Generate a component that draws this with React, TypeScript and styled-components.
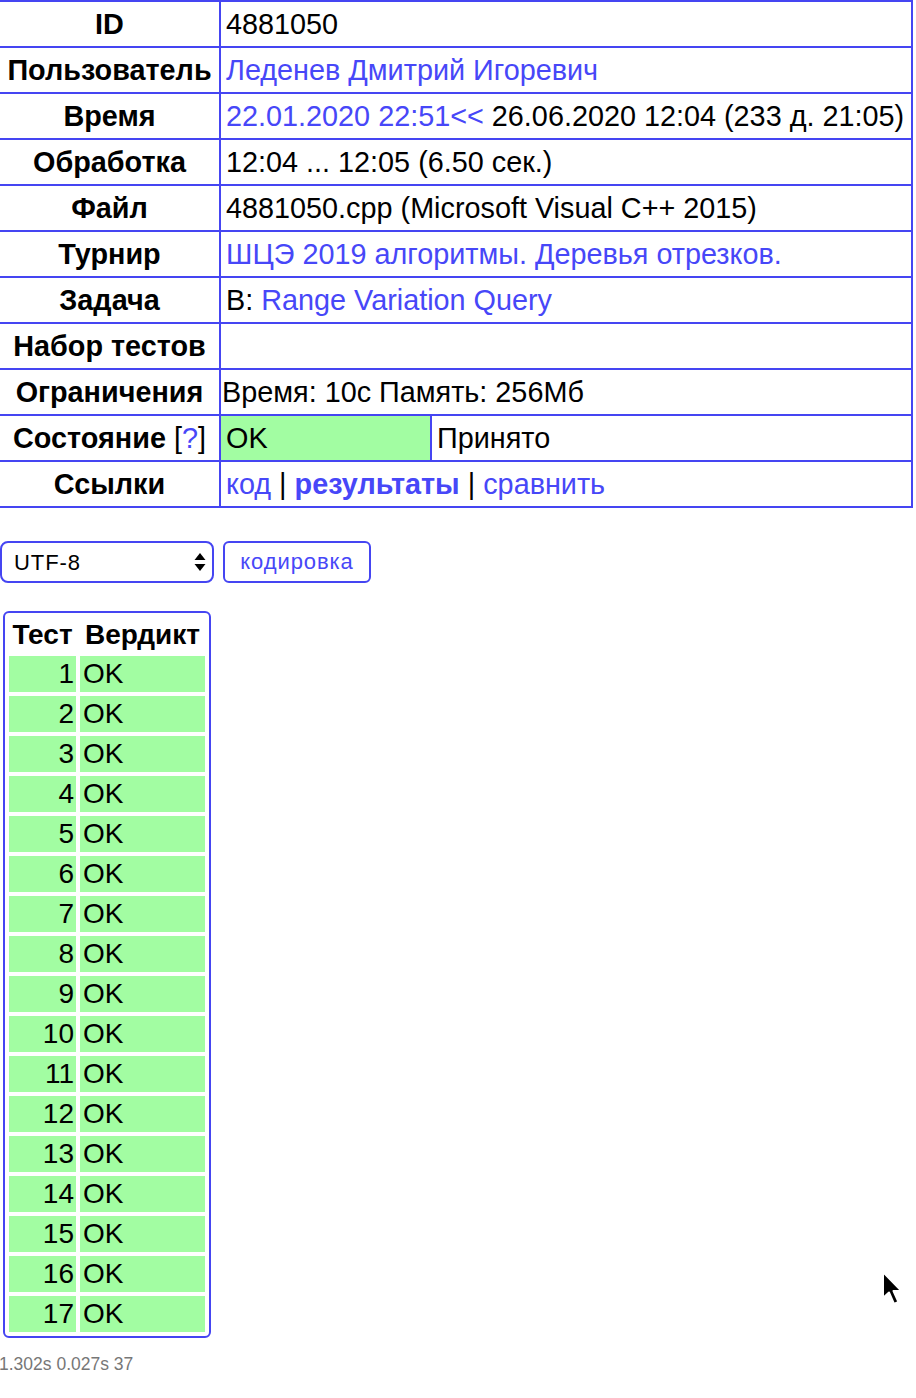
import React from "react";
import styled, { createGlobalStyle } from "styled-components";

const blue = "#4545f2";
const link = "#4747f8";
const green = "#a2fda2";

const GlobalStyle = createGlobalStyle`
  html, body {
    margin: 0;
    padding: 0;
    background: #fff;
  }
  body {
    font-family: "Liberation Sans", Arial, sans-serif;
    color: #000;
    overflow: hidden;
  }
`;

const Page = styled.div`
  position: relative;
  width: 916px;
  min-height: 1398px;
`;

const InfoTable = styled.table`
  border-collapse: collapse;
  table-layout: fixed;
  width: 915px;
  margin-left: -2px;
  border: 2px solid ${blue};
  font-size: 28.8px;
`;

const Label = styled.th`
  border: 2px solid ${blue};
  height: 44px;
  padding: 0 2px;
  text-align: center;
  font-weight: bold;
  white-space: nowrap;
`;

const Value = styled.td<{ $tight?: boolean; $ok?: boolean }>`
  border: 2px solid ${blue};
  height: 44px;
  padding: 0 ${(p) => (p.$tight ? "1px" : "5px")};
  white-space: nowrap;
  background: ${(p) => (p.$ok ? green : "transparent")};
`;

const Plain = styled.span`
  font-weight: normal;
`;

const Link = styled.a<{ $bold?: boolean }>`
  color: ${link};
  text-decoration: none;
  font-weight: ${(p) => (p.$bold ? "bold" : "normal")};
  cursor: pointer;
`;

const Controls = styled.div`
  display: flex;
  gap: 9px;
  margin-top: 33px;
`;

const SelectWrap = styled.div`
  position: relative;
  width: 214px;
  height: 42px;
`;

const Select = styled.select`
  appearance: none;
  width: 100%;
  height: 100%;
  box-sizing: border-box;
  border: 2px solid ${blue};
  border-radius: 8px;
  background: #fff;
  font-family: "Liberation Sans", Arial, sans-serif;
  font-size: 22px;
  letter-spacing: 0.9px;
  padding: 0 0 0 12px;
  color: #000;
  outline: none;
`;

const Arrows = styled.svg`
  position: absolute;
  right: 8px;
  top: 12px;
  pointer-events: none;
`;

const Button = styled.button`
  height: 42px;
  width: 148px;
  box-sizing: border-box;
  border: 2px solid ${blue};
  border-radius: 6px;
  background: #fff;
  color: ${link};
  font-family: "Liberation Sans", Arial, sans-serif;
  font-size: 22px;
  letter-spacing: 0.9px;
  padding: 0;
`;

const TestTable = styled.table`
  border-collapse: separate;
  border-spacing: 4px;
  border: 2px solid ${blue};
  border-radius: 6px;
  margin: 28px 0 0 3px;
  font-size: 28px;
`;

const TestHead = styled.th`
  height: 35px;
  padding: 0 2px;
  font-weight: bold;
  text-align: center;
  white-space: nowrap;
`;

const TestCell = styled.td<{ $num?: boolean }>`
  height: 36px;
  padding: 0 ${(p) => (p.$num ? "2px" : "3px")};
  background: ${green};
  text-align: ${(p) => (p.$num ? "right" : "left")};
  width: ${(p) => (p.$num ? "63px" : "119px")};
  line-height: 36px;
`;

const Footer = styled.div`
  margin: 16px 0 0 -1px;
  font-size: 17.5px;
  color: #777;
`;

const Pointer = styled.svg`
  position: absolute;
  left: 880px;
  top: 1270px;
`;

const tests = Array.from({ length: 17 }, (_, i) => i + 1);

const App = () => {
  return (
    <Page>
      <GlobalStyle />
      <InfoTable>
        <colgroup>
          <col style={{ width: 221 }} />
          <col style={{ width: 211 }} />
          <col />
        </colgroup>
        <tbody>
          <tr>
            <Label>ID</Label>
            <Value colSpan={2}>4881050</Value>
          </tr>
          <tr>
            <Label>Пользователь</Label>
            <Value colSpan={2}>
              <Link>Леденев Дмитрий Игоревич</Link>
            </Value>
          </tr>
          <tr>
            <Label>Время</Label>
            <Value colSpan={2}>
              <Link>22.01.2020 22:51&lt;&lt;</Link> 26.06.2020 12:04 (233 д. 21:05)
            </Value>
          </tr>
          <tr>
            <Label>Обработка</Label>
            <Value colSpan={2}>12:04 ... 12:05 (6.50 сек.)</Value>
          </tr>
          <tr>
            <Label>Файл</Label>
            <Value colSpan={2}>4881050.cpp (Microsoft Visual C++ 2015)</Value>
          </tr>
          <tr>
            <Label>Турнир</Label>
            <Value colSpan={2}>
              <Link>ШЦЭ 2019 алгоритмы. Деревья отрезков.</Link>
            </Value>
          </tr>
          <tr>
            <Label>Задача</Label>
            <Value colSpan={2}>
              B: <Link>Range Variation Query</Link>
            </Value>
          </tr>
          <tr>
            <Label>Набор тестов</Label>
            <Value colSpan={2}></Value>
          </tr>
          <tr>
            <Label>Ограничения</Label>
            <Value colSpan={2} $tight>
              Время: 10с Память: 256Мб
            </Value>
          </tr>
          <tr>
            <Label>
              Состояние{" "}
              <Plain>
                [<Link>?</Link>]
              </Plain>
            </Label>
            <Value $ok>OK</Value>
            <Value>Принято</Value>
          </tr>
          <tr>
            <Label>Ссылки</Label>
            <Value colSpan={2}>
              <Link>код</Link> | <Link $bold>результаты</Link> |{" "}
              <Link>сравнить</Link>
            </Value>
          </tr>
        </tbody>
      </InfoTable>

      <Controls>
        <SelectWrap>
          <Select defaultValue="UTF-8">
            <option>UTF-8</option>
            <option>windows-1251</option>
          </Select>
          <Arrows width="12" height="18" viewBox="0 0 12 18">
            <path d="M6 0 L11.5 7 L0.5 7 Z" fill="#000" />
            <path d="M6 18 L11.5 11 L0.5 11 Z" fill="#000" />
          </Arrows>
        </SelectWrap>
        <Button>кодировка</Button>
      </Controls>

      <TestTable>
        <thead>
          <tr>
            <TestHead>Тест</TestHead>
            <TestHead>Вердикт</TestHead>
          </tr>
        </thead>
        <tbody>
          {tests.map((n) => (
            <tr key={n}>
              <TestCell $num>{n}</TestCell>
              <TestCell>OK</TestCell>
            </tr>
          ))}
        </tbody>
      </TestTable>

      <Footer>1.302s 0.027s 37</Footer>

      <Pointer width="26" height="38" viewBox="0 0 26 38">
        <path
          d="M3 2 L3 28 L9 22.5 L14 34 L18.5 32 L13.5 21 L21.5 21 Z"
          fill="#000"
          stroke="#fff"
          strokeWidth="2"
          strokeLinejoin="round"
        />
      </Pointer>
    </Page>
  );
};

export default App;
